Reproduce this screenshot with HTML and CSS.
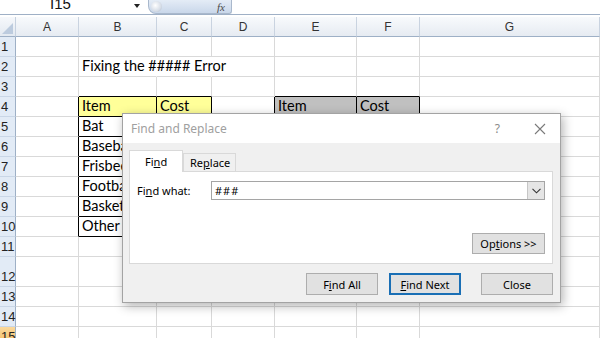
FILE: index.html
```html
<!DOCTYPE html>
<html lang="en">
<head>
    <meta charset="UTF-8">
    <title>Fixing the ##### Error</title>
    <link rel="stylesheet" href="styles.css">
</head>
<body>
    <div class="formula-bar">
        <div class="name-box">I15</div>
        <span class="name-arrow"></span>
        <div class="fx-pill">
            <span class="knob"></span>
            <span class="fx">fx</span>
        </div>
        <div class="formula-input"></div>
    </div>

    <div class="sheet">
        <!-- column headers -->
        <div class="corner">
            <svg width="12" height="12" viewBox="0 0 12 12"><polygon points="12,1 12,12 1,12" fill="#bccbde"/></svg>
        </div>
        <div class="ch">A</div><div class="ch">B</div><div class="ch">C</div><div class="ch">D</div>
        <div class="ch">E</div><div class="ch">F</div><div class="ch">G</div>

        <div class="rh">1</div>
        <div class="c"></div><div class="c"></div><div class="c"></div><div class="c"></div><div class="c"></div><div class="c"></div><div class="c"></div>

        <div class="rh">2</div>
        <div class="c"></div><div class="c nor">Fixing the ##### Error</div><div class="c nor"></div><div class="c"></div><div class="c"></div><div class="c"></div><div class="c"></div>

        <div class="rh">3</div>
        <div class="c"></div><div class="c eb"></div><div class="c eb"></div><div class="c"></div><div class="c eb"></div><div class="c eb"></div><div class="c"></div>

        <div class="rh">4</div>
        <div class="c er"></div><div class="c er eb yel">Item</div><div class="c er eb yel">Cost</div><div class="c er"></div><div class="c er eb gry">Item</div><div class="c er eb gry">Cost</div><div class="c"></div>

        <div class="rh">5</div>
        <div class="c er"></div><div class="c er eb">Bat</div><div class="c er eb"></div><div class="c"></div><div class="c"></div><div class="c"></div><div class="c"></div>

        <div class="rh">6</div>
        <div class="c er"></div><div class="c er eb">Baseball</div><div class="c er eb"></div><div class="c"></div><div class="c"></div><div class="c"></div><div class="c"></div>

        <div class="rh">7</div>
        <div class="c er"></div><div class="c er eb">Frisbee</div><div class="c er eb"></div><div class="c"></div><div class="c"></div><div class="c"></div><div class="c"></div>

        <div class="rh">8</div>
        <div class="c er"></div><div class="c er eb">Football</div><div class="c er eb"></div><div class="c"></div><div class="c"></div><div class="c"></div><div class="c"></div>

        <div class="rh">9</div>
        <div class="c er"></div><div class="c er eb">Basketball</div><div class="c er eb"></div><div class="c"></div><div class="c"></div><div class="c"></div><div class="c"></div>

        <div class="rh">10</div>
        <div class="c er"></div><div class="c er eb">Other</div><div class="c er eb"></div><div class="c"></div><div class="c"></div><div class="c"></div><div class="c"></div>

        <div class="rh">11</div>
        <div class="c"></div><div class="c"></div><div class="c"></div><div class="c"></div><div class="c"></div><div class="c"></div><div class="c"></div>

        <div class="rh">12</div>
        <div class="c"></div><div class="c"></div><div class="c"></div><div class="c"></div><div class="c"></div><div class="c"></div><div class="c"></div>

        <div class="rh">13</div>
        <div class="c"></div><div class="c"></div><div class="c"></div><div class="c"></div><div class="c"></div><div class="c"></div><div class="c"></div>

        <div class="rh">14</div>
        <div class="c"></div><div class="c"></div><div class="c"></div><div class="c"></div><div class="c"></div><div class="c"></div><div class="c"></div>

        <div class="rh sel">15</div>
        <div class="c"></div><div class="c"></div><div class="c"></div><div class="c"></div><div class="c"></div><div class="c"></div><div class="c"></div>
    </div>

    <div class="dialog">
        <div class="title-bar">
            <span class="title">Find and Replace</span>
            <span class="help">?</span>
            <svg class="close-x" width="12" height="12" viewBox="0 0 12 12">
                <path d="M1 1 L11 11 M11 1 L1 11" stroke="#7a7a7a" stroke-width="1.1" fill="none"/>
            </svg>
        </div>
        <div class="dlg-body">
            <div class="tabs">
                <div class="tab active">Fi<u>n</u>d</div>
                <div class="tab">Re<u>p</u>lace</div>
            </div>
            <div class="panel">
                <div class="find-row">
                    <label class="find-label">Fi<u>n</u>d what:</label>
                    <div class="combo">
                        <span class="combo-text">###</span>
                        <span class="combo-btn">
                            <svg width="9" height="6" viewBox="0 0 9 6"><path d="M0.5 0.8 L4.5 4.8 L8.5 0.8" stroke="#333" stroke-width="1.1" fill="none"/></svg>
                        </span>
                    </div>
                </div>
                <div class="options-row">
                    <button class="btn options">Op<u>t</u>ions &gt;&gt;</button>
                </div>
            </div>
            <div class="actions">
                <button class="btn">F<u>i</u>nd All</button>
                <button class="btn focus"><u>F</u>ind Next</button>
                <button class="btn close">Close</button>
            </div>
        </div>
    </div>
</body>
</html>
```

FILE: styles.css
```css
* {
    margin: 0;
    padding: 0;
    box-sizing: border-box;
}

body {
    width: 600px;
    height: 338px;
    overflow: hidden;
    background: #fff;
    position: relative;
    font-family: 'Liberation Sans', Arial, sans-serif;
}

/* formula bar */
.formula-bar {
    display: flex;
    align-items: flex-start;
    height: 15px;
    border-bottom: 1px solid #9fb0c6;
    margin-bottom: 2px;
    overflow: hidden;
    background: #fff;
}

.name-box {
    width: 134px;
    padding-left: 50px;
    margin-top: -4px;
    font-size: 15px;
    line-height: 16px;
    color: #111;
}

.name-arrow {
    width: 0;
    height: 0;
    margin-top: 4px;
    border-left: 3px solid transparent;
    border-right: 3px solid transparent;
    border-top: 4px solid #222;
}

.fx-pill {
    display: flex;
    align-items: center;
    justify-content: space-between;
    width: 84px;
    height: 14px;
    margin-left: 8px;
    padding: 0 6px 0 2px;
    border: 1px solid #a9b8cc;
    border-top: none;
    border-radius: 0 0 3px 8px;
    background: linear-gradient(#e4ecf6, #c9d7ea);
}

.knob {
    width: 11px;
    height: 11px;
    border-radius: 50%;
    background: radial-gradient(circle at 40% 40%, #fff, #d6dde7 60%, #a9b4c3);
}

.fx {
    font: italic 11px 'Liberation Serif', serif;
    color: #4a4a4a;
}

.formula-input {
    flex: 1;
}

/* grid */
.sheet {
    display: grid;
    grid-template-columns: 16px 63px 78px 55px 63px 82px 63px 180px;
    grid-template-rows: 20px repeat(11, 20px) 30px repeat(3, 20px);
}

.corner {
    display: flex;
    align-items: flex-end;
    justify-content: flex-end;
    padding: 0 2px 2px 0;
    background: linear-gradient(#f6f8fb, #e3e9f1);
    border-right: 1px solid #c6d1df;
    border-bottom: 1px solid #9eb0c6;
}

.ch {
    display: flex;
    align-items: center;
    justify-content: center;
    font-size: 12px;
    color: #333;
    background: linear-gradient(#f8fafc, #e6ebf2);
    border-right: 1px solid #c9d3e0;
    border-bottom: 1px solid #9eb0c6;
}

.rh {
    display: flex;
    align-items: flex-end;
    padding: 0 0 2px 1px;
    font-size: 13px;
    color: #222;
    background: #e2ebf6;
    border-right: 1px solid #9eb0c6;
    border-bottom: 1px solid #c9d6e6;
}

.rh.sel {
    background: linear-gradient(#fbd99c, #f3b95a);
    border-bottom-color: #e0a64a;
}

.c {
    display: flex;
    align-items: flex-end;
    padding: 0 0 2px 3px;
    font-family: Lato, 'Liberation Sans', sans-serif;
    font-size: 14.5px;
    line-height: 16px;
    color: #000;
    white-space: nowrap;
    border-right: 1px solid #d9d9d9;
    border-bottom: 1px solid #d9d9d9;
}

.c.nor {
    border-right-color: transparent;
}

.c.er {
    border-right-color: #000;
}

.c.eb {
    border-bottom-color: #000;
}

.c.yel {
    background: #ffff99;
}

.c.gry {
    background: #c0c0c0;
}

/* find and replace dialog */
.dialog {
    position: absolute;
    left: 122px;
    top: 113px;
    width: 439px;
    height: 190px;
    display: flex;
    flex-direction: column;
    border: 1px solid #a3a3a3;
    background: #f0f0f0;
    box-shadow: 2px 3px 10px rgba(0, 0, 0, .3);
    font-family: 'Noto Sans', 'Liberation Sans', sans-serif;
    font-size: 11px;
    color: #000;
}

.title-bar {
    display: flex;
    align-items: center;
    height: 29px;
    padding: 0 14px 0 8px;
    background: #fff;
}

.title {
    flex: 1;
    font-size: 12px;
    color: #a0a0a0;
}

.help {
    margin-right: 34px;
    font-size: 12px;
    color: #8a8a8a;
}

.dlg-body {
    flex: 1;
    padding: 7px 7px 0 6px;
}

.tabs {
    display: flex;
    align-items: flex-end;
    height: 21px;
}

.tab {
    width: 53px;
    height: 18px;
    padding-left: 6px;
    line-height: 17px;
    border: 1px solid #d9d9d9;
    border-bottom: none;
    background: #f0f0f0;
}

.tab.active {
    width: 54px;
    height: 22px;
    margin-bottom: -1px;
    padding-left: 15px;
    line-height: 22px;
    background: #fff;
    position: relative;
    z-index: 1;
}

.panel {
    height: 93px;
    padding: 9px 7px 0 7px;
    border: 1px solid #d9d9d9;
    background: #fff;
}

.find-row {
    display: flex;
    align-items: center;
}

.find-label {
    width: 74px;
}

.combo {
    flex: 1;
    display: flex;
    align-items: center;
    height: 19px;
    border: 1px solid #a5a5a5;
    background: #fff;
}

.combo-text {
    flex: 1;
    padding-left: 3px;
    letter-spacing: 1px;
}

.combo-btn {
    display: flex;
    align-items: center;
    justify-content: center;
    width: 17px;
    height: 17px;
    background: #e5e5e5;
    border-left: 1px solid #c6c6c6;
}

.options-row {
    display: flex;
    justify-content: flex-end;
    margin-top: 33px;
}

.btn {
    width: 72px;
    height: 22px;
    border: 1px solid #adadad;
    background: #e1e1e1;
    font-family: 'Noto Sans', 'Liberation Sans', sans-serif;
    font-size: 11px;
    color: #000;
}

.btn.options {
    width: 73px;
    height: 21px;
}

.actions {
    display: flex;
    justify-content: flex-end;
    gap: 11px;
    margin-top: 9px;
}

.btn.focus {
    border: 2px solid #1a6fb5;
}

.btn.close {
    margin-left: 9px;
}
```
